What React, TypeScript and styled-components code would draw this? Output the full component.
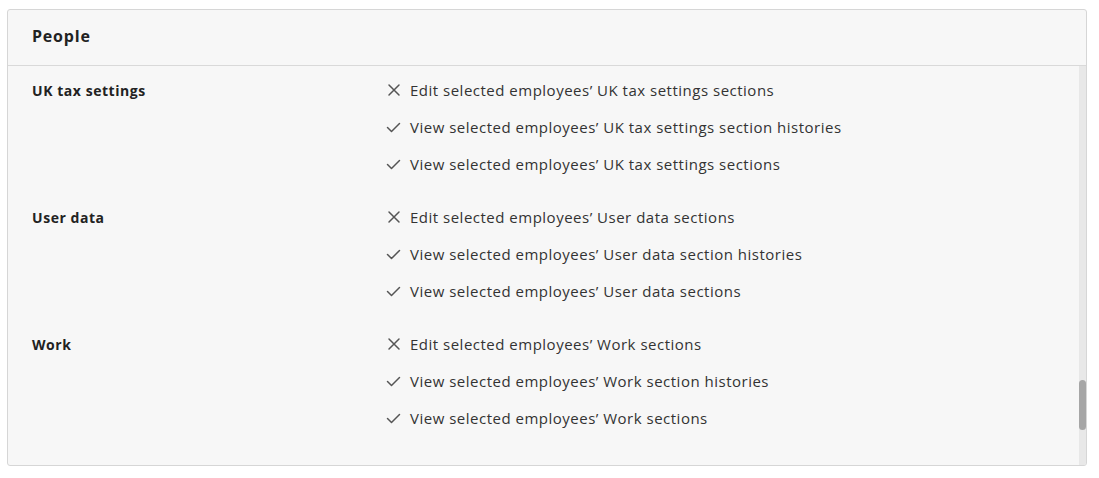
import React from "react";
import styled, { createGlobalStyle } from "styled-components";

const Global = createGlobalStyle`
  html, body { margin: 0; padding: 0; background: #ffffff; }
  body { font-family: "Open Sans", "Liberation Sans", sans-serif; }
`;

const Page = styled.div`
  padding: 9px 12px 12px 7px;
  width: 1099px;
  box-sizing: border-box;
`;

const Card = styled.section`
  position: relative;
  width: 1080px;
  height: 457px;
  box-sizing: border-box;
  border: 1px solid #d6d6d6;
  border-radius: 3px;
  background: #f7f7f7;
  display: flex;
  flex-direction: column;
  overflow: hidden;
`;

const Header = styled.header`
  height: 56px;
  flex: none;
  box-sizing: border-box;
  border-bottom: 1px solid #d9d9d9;
  display: flex;
  align-items: center;
  padding: 0 24px 4px 24px;
  font-size: 16px;
  font-weight: 700;
  letter-spacing: 0.8px;
  color: #222;
`;

const Body = styled.div`
  flex: 1;
  padding: 13px 24px 0 24px;
  display: flex;
  flex-direction: column;
  gap: 31px;
`;

const Section = styled.div`
  display: grid;
  grid-template-columns: 354px 1fr;
`;

const Title = styled.div`
  padding-top: 1px;
  font-size: 14px;
  font-weight: 700;
  color: #222;
  line-height: 22px;
  letter-spacing: 0.55px;
`;

const Items = styled.ul`
  list-style: none;
  margin: 0;
  padding: 0;
  display: flex;
  flex-direction: column;
  gap: 15px;
`;

const Item = styled.li`
  display: flex;
  align-items: center;
  gap: 9px;
  height: 22px;
  font-size: 15px;
  color: #333;
  letter-spacing: 0.5px;
`;

const IconBox = styled.span`
  width: 15px;
  height: 15px;
  display: inline-flex;
  align-items: center;
  justify-content: center;
  color: #555;
`;

const Track = styled.div`
  position: absolute;
  right: 0;
  top: 56px;
  bottom: 0;
  width: 7px;
  background: #e8e8e8;
`;

const Thumb = styled.div`
  position: absolute;
  left: 0;
  right: 0;
  top: 314px;
  height: 50px;
  border-radius: 4px;
  background: #a6a6a6;
`;

const Cross = () => (
  <svg width="14" height="14" viewBox="0 0 14 14" fill="none" stroke="currentColor" strokeWidth="1.5" strokeLinecap="round">
    <path d="M2 2 L12 12 M12 2 L2 12" />
  </svg>
);

const Check = () => (
  <svg width="15" height="14" viewBox="0 0 15 14" fill="none" stroke="currentColor" strokeWidth="1.5" strokeLinecap="round" strokeLinejoin="round">
    <path d="M1.5 7.5 L5.5 11.5 L13.5 3.5" />
  </svg>
);

type Perm = { allowed: boolean; text: string };

const sections: { title: string; perms: Perm[] }[] = [
  {
    title: "UK tax settings",
    perms: [
      { allowed: false, text: "Edit selected employees\u2019 UK tax settings sections" },
      { allowed: true, text: "View selected employees\u2019 UK tax settings section histories" },
      { allowed: true, text: "View selected employees\u2019 UK tax settings sections" },
    ],
  },
  {
    title: "User data",
    perms: [
      { allowed: false, text: "Edit selected employees\u2019 User data sections" },
      { allowed: true, text: "View selected employees\u2019 User data section histories" },
      { allowed: true, text: "View selected employees\u2019 User data sections" },
    ],
  },
  {
    title: "Work",
    perms: [
      { allowed: false, text: "Edit selected employees\u2019 Work sections" },
      { allowed: true, text: "View selected employees\u2019 Work section histories" },
      { allowed: true, text: "View selected employees\u2019 Work sections" },
    ],
  },
];

export default function App() {
  return (
    <>
      <Global />
      <Page>
        <Card>
          <Header>People</Header>
          <Body>
            {sections.map((s) => (
              <Section key={s.title}>
                <Title>{s.title}</Title>
                <Items>
                  {s.perms.map((p) => (
                    <Item key={p.text}>
                      <IconBox>{p.allowed ? <Check /> : <Cross />}</IconBox>
                      {p.text}
                    </Item>
                  ))}
                </Items>
              </Section>
            ))}
          </Body>
          <Track>
            <Thumb />
          </Track>
        </Card>
      </Page>
    </>
  );
}
